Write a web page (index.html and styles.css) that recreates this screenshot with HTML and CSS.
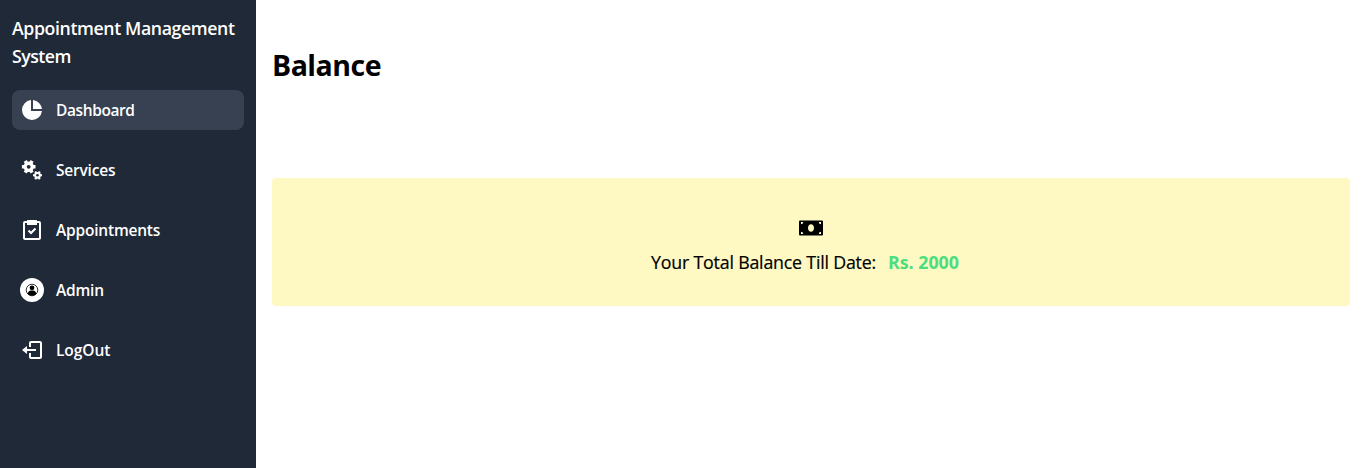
FILE: index.html
```
<!DOCTYPE html>
<html lang="en">
<head>
<meta charset="utf-8">
<title>Appointment Management System</title>
<link rel="stylesheet" href="styles.css">
</head>
<body>
<div class="app">
  <aside class="sidebar">
    <h2 class="brand"><span class="brand-main">Appointment Management</span> <span class="brand-sub">System</span></h2>
    <nav class="menu">
      <a class="item active">
        <svg class="icon" viewBox="0 0 24 24"><path d="M11 2.05A10 10 0 1 0 21.95 13H11z"/><path d="M13 2.05V11h8.95A10 10 0 0 0 13 2.05z"/></svg>
        <span class="label dashboard">Dashboard</span>
      </a>
      <a class="item">
        <svg class="icon" viewBox="0 0 24 24"><circle cx="8.700" cy="8.800" r="5.200"/><path d="M1.900 8.800h13.600M5.300 2.910l6.800 11.780M12.100 2.910L5.300 14.690" stroke="currentColor" stroke-width="3.500"/><circle class="hole" cx="8.700" cy="8.800" r="1.900"/><circle cx="17.500" cy="17.300" r="3.400"/><path d="M13 17.300h9M15.250 13.400l4.500 7.800M19.750 13.400l-4.500 7.800" stroke="currentColor" stroke-width="2.100"/><circle class="hole" cx="17.500" cy="17.300" r="1.300"/></svg>
        <span class="label services">Services</span>
      </a>
      <a class="item">
        <svg class="icon" viewBox="0 0 24 24"><path d="M5 22h14c1.103 0 2-.897 2-2V5c0-1.103-.897-2-2-2h-2a1 1 0 0 0-1-1H8a1 1 0 0 0-1 1H5c-1.103 0-2 .897-2 2v15c0 1.103.897 2 2 2zM5 5h14v15H5V5z" fill-rule="evenodd"/><path d="M7 2.500h10V7H7z"/><path d="m11 13.586-1.793-1.793-1.414 1.414L11 16.414l5.207-5.207-1.414-1.414z"/></svg>
        <span class="label appointments">Appointments</span>
      </a>
      <a class="item">
        <svg class="icon" viewBox="0 0 24 24"><circle cx="12" cy="12" r="12"/><circle cx="12" cy="12" r="5.8" fill="#fff" stroke="#000" stroke-width=".8"/><circle cx="12" cy="9.8" r="2.4" fill="#000"/><path fill="#000" d="M7.6 15.7c.3-2 1.700-3 3.200-3.200h2.400c1.500.2 2.900 1.200 3.200 3.200A5.800 5.800 0 0 1 7.600 15.700z"/></svg>
        <span class="label admin">Admin</span>
      </a>
      <a class="item">
        <svg class="icon" viewBox="0 0 24 24"><path d="m2 12 5 4v-3h9v-2H7V8z"/><path d="M11 3h9c1.100 0 2 .9 2 2v14c0 1.100-.9 2-2 2h-9c-1.100 0-2-.9-2-2v-4h2v4h9V5h-9v4H9V5c0-1.100.9-2 2-2z"/></svg>
        <span class="label logout">LogOut</span>
      </a>
    </nav>
  </aside>
  <main class="content">
    <h1 class="title"><span>Balance</span></h1>
    <section class="card">
      <svg class="money" viewBox="0 0 24 24"><path fill-rule="evenodd" d="M1 4.500h22a1 1 0 0 1 1 1v13a1 1 0 0 1-1 1H1a1 1 0 0 1-1-1v-13a1 1 0 0 1 1-1zM12 8.300c-1.700 0-3 1.600-3 3.700s1.300 3.700 3 3.700 3-1.600 3-3.700-1.300-3.700-3-3.700zM2 6v2.200A2.200 2.200 0 0 0 4.200 6zM22 6v2.200A2.200 2.200 0 0 1 19.800 6zM2 18v-2.200A2.200 2.200 0 0 1 4.200 18zM22 18v-2.200a2.200 2.200 0 0 0-2.200 2.200z"/></svg>
      <p class="summary"><span class="caption">Your Total Balance Till Date:</span><span class="amount">Rs. 2000</span></p>
    </section>
  </main>
</div>
</body>
</html>
```
FILE: styles.css
```
* { box-sizing: border-box; margin: 0; }
body { font-family: "Open Sans", "Noto Sans", sans-serif; background: #fff; color: #000; }
.app { display: flex; height: 468px; }
.sidebar { width: 256px; flex: none; background: #1f2937; color: #fff; padding: 14px 12px; }
.brand { font-size: 17.700px; line-height: 28px; font-weight: 600; white-space: nowrap; display: flex; flex-direction: column; align-items: flex-start; letter-spacing: -0.38px; }
.brand-sub { letter-spacing: -0.5px; }
.menu { display: flex; flex-direction: column; gap: 20px; margin-top: 20px; }
.item { display: flex; align-items: center; gap: 12px; height: 40px; padding: 0 8px; border-radius: 8px; font-size: 15.500px; font-weight: 600; line-height: 24px; letter-spacing: -0.2px; }
.active { background: #374151; }
.dashboard { letter-spacing: -0.4px; }
.logout { letter-spacing: -0.05px; }
.icon { width: 24px; height: 24px; fill: currentColor; flex: none; }
.hole { fill: #1f2937; }
.content { flex: 1; padding: 45px 16px 0; }
.title { font-size: 28.500px; line-height: 40px; font-weight: 700; letter-spacing: -0.5px; }
.card { margin-top: 93px; height: 128px; padding-top: 38px; background: #fef9c3; border-radius: 4px; display: flex; flex-direction: column; align-items: center; }
.money { width: 24px; height: 24px; }
.summary { display: flex; gap: 12px; margin-top: 8px; margin-right: 12px; font-size: 17.800px; line-height: 28px; font-weight: 400; white-space: nowrap; }
.caption { -webkit-text-stroke: 0.2px #000; letter-spacing: -0.2px; }
.amount { color: #4ade80; font-weight: 700; letter-spacing: 0; }
```
